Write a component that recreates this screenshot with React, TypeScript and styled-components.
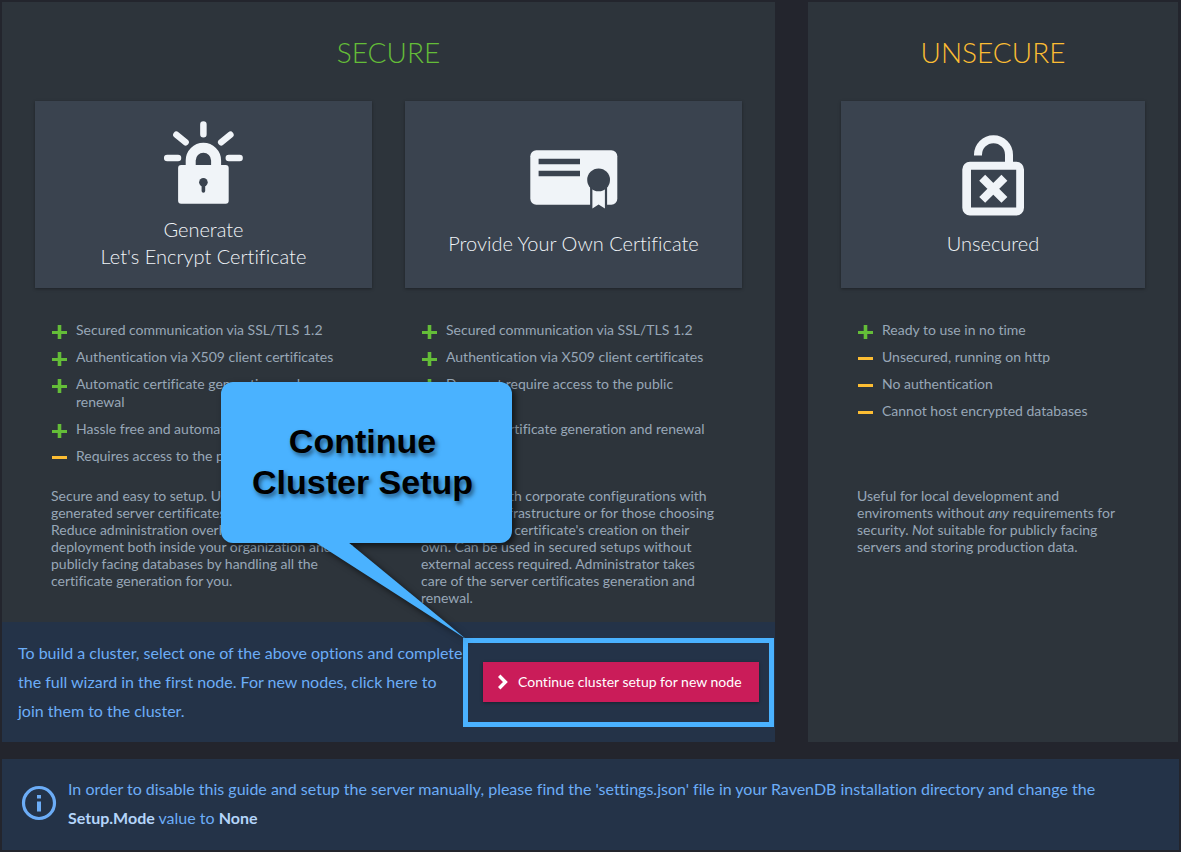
import React from "react";
import styled, { createGlobalStyle } from "styled-components";

const GlobalStyle = createGlobalStyle`
  * { box-sizing: border-box; }
  body {
    margin: 0;
    background: #23252d;
    color: #98a7b7;
    font-family: Lato, "Liberation Sans", sans-serif;
    font-size: 14px;
    line-height: 18px;
    font-variant-ligatures: none;
  }
`;

const Page = styled.main`
  display: flex;
  flex-direction: column;
  gap: 17px;
  padding: 2px 2px 2px 2px;
`;

const Panels = styled.div`
  display: grid;
  grid-template-columns: minmax(0, 773fr) minmax(0, 370fr);
  gap: 33px;
  padding-right: 1px;
`;

const Panel = styled.section`
  display: flex;
  flex-direction: column;
  background: #2d343b;
`;

const PanelTitle = styled.h2<{ $tone: "safe" | "risky" }>`
  margin: 30px 0 29px;
  font-size: 28px;
  font-weight: 300;
  line-height: 40px;
  text-align: center;
  color: ${(p) => (p.$tone === "safe" ? "#64bd38" : "#fcbd33")};
`;

const Options = styled.div`
  display: flex;
  gap: 33px;
  padding: 0 33px;
`;

const Option = styled.article`
  flex: 1 1 0;
  min-width: 0;
`;

const OptionCard = styled.button`
  display: flex;
  flex-direction: column;
  align-items: center;
  justify-content: center;
  gap: 2px;
  width: 100%;
  height: 187px;
  padding: 0 0 1px;
  border: 0;
  background: #3a434f;
  box-shadow: 0 1px 3px rgba(0, 0, 0, 0.35);
  color: #f0f4f8;
  font-family: inherit;
  font-size: 20px;
  font-weight: 300;
  line-height: 27px;
  font-variant-ligatures: none;
  cursor: pointer;
`;

const Details = styled.div`
  padding: 33px 16px 16px;
`;

const Traits = styled.ul`
  display: flex;
  flex-direction: column;
  gap: 9px;
  min-height: 144px;
  margin: 0 0 22px;
  padding: 0 8px 0 1px;
  list-style: none;
`;

const Trait = styled.li`
  display: flex;
  align-items: flex-start;
  gap: 9px;
`;

const TraitIcon = styled.svg`
  flex: none;
  width: 15px;
  height: 18px;
`;

const Description = styled.p`
  margin: 0;
  line-height: 17px;
`;

const ClusterBar = styled.div`
  display: flex;
  align-items: center;
  gap: 16px;
  margin-top: auto;
  padding: 16px 16px 17px;
  background: #243348;
`;

const InfoText = styled.p`
  flex: 1;
  margin: 0;
  color: #6cadf7;
  font-size: 16px;
  line-height: 29px;

  strong { color: #b4d5fa; font-weight: 700; }
`;

const ButtonAnchor = styled.div`
  position: relative;
  flex: none;
`;

const ContinueButton = styled.button`
  display: flex;
  align-items: center;
  gap: 10px;
  width: 276px;
  height: 40px;
  padding: 0 15px;
  border: 0;
  background: #ca1c59;
  box-shadow: 0 1px 3px rgba(0, 0, 0, 0.35);
  color: #fff;
  font-family: inherit;
  font-size: 14px;
  font-variant-ligatures: none;
  white-space: nowrap;
  cursor: pointer;
`;

const Highlight = styled.div`
  position: absolute;
  inset: -24px -15px -25px -20px;
  border: 5px solid #4ab2ff;
  pointer-events: none;
`;

const Callout = styled.div`
  position: absolute;
  right: 247px;
  bottom: 159px;
  display: flex;
  align-items: center;
  justify-content: center;
  width: 291px;
  height: 161px;
  padding-right: 8px;
  border-radius: 12px;
  background: #4ab2ff;
  filter: drop-shadow(3px 3px 3px rgba(0, 0, 0, 0.6));
  color: #000;
  font: bold 34px/41px "Liberation Sans", Arial, sans-serif;
  text-align: center;
  text-shadow: 2px 3px 4px rgba(0, 0, 0, 0.5);
`;

const CalloutTail = styled.svg`
  position: absolute;
  top: 160px;
  left: 94px;
  width: 152px;
  height: 98px;
`;

const Notice = styled.aside`
  display: flex;
  align-items: center;
  gap: 11px;
  padding: 15px 20px 18px 19px;
  background: #243348;
`;

const NoticeIcon = styled.svg`
  flex: none;
  width: 36px;
  height: 36px;
`;

const INK = "#f0f4f8";
const CARD = "#3a434f";

const LetsEncryptIcon = () => (
  <svg width="96" height="96" viewBox="0.6 0 96 96" fill="none" aria-hidden="true">
    <path
      d="M48 6.4V16.3M21 16.8L30.2 24.2M75 16.8L65.8 24.2M11.8 40H22.6M84.2 40H73.4"
      stroke={INK} strokeWidth="6.5" strokeLinecap="round"
    />
    <path d="M35.3 50V42.4a12.7 12.7 0 0 1 25.4 0V50" stroke={INK} strokeWidth="10" />
    <rect x="22.7" y="47" width="50.6" height="38.8" rx="3" fill={INK} />
    <circle cx="48" cy="64.3" r="4.3" fill={CARD} />
    <path d="M48 65V73" stroke={CARD} strokeWidth="3.6" strokeLinecap="round" />
  </svg>
);

const CertificateIcon = () => (
  <svg width="96" height="96" viewBox="0.2 0 96 96" aria-hidden="true">
    <rect x="4.5" y="18.3" width="87" height="54.5" rx="6" fill={INK} />
    <path d="M12.8 26.8H54.2V32.3H12.8zM12.8 38.8H54.2V44.3H12.8zM64.3 48H81.3V73H64.3z" fill={CARD} />
    <path d="M66.6 56H79.1V76.5L72.8 72.6L66.6 76.5z" fill={INK} />
    <circle cx="72.8" cy="47.9" r="11.4" fill={CARD} />
  </svg>
);

const UnsecuredIcon = () => (
  <svg width="96" height="96" viewBox="0 0 96 96" fill="none" aria-hidden="true">
    <path d="M33 23.4V22.7a15.5 15.5 0 0 1 31 0V33" stroke={INK} strokeWidth="8" />
    <path
      fillRule="evenodd"
      d="M25 29.8H71.3a7.7 7.7 0 0 1 7.7 7.7V75.8a7.7 7.7 0 0 1-7.7 7.7H25a7.7 7.7 0 0 1-7.7-7.7V37.5a7.7 7.7 0 0 1 7.7-7.7zM26 37.8V75.5H71.2V37.8z"
      fill={INK}
    />
    <path d="M37.2 45.7L59.4 67.9M59.4 45.7L37.2 67.9" stroke={INK} strokeWidth="8.4" />
  </svg>
);

type TraitItem = { good: boolean; text: string };

const TraitList = ({ items }: { items: TraitItem[] }) => (
  <Traits>
    {items.map((item) => (
      <Trait key={item.text}>
        <TraitIcon viewBox="0 0 15 18" role="img" aria-label={item.good ? "Pro" : "Con"}>
          {item.good ? (
            <path d="M0 10H5.7V4H9.3V10H15V13H9.3V18H5.7V13H0z" fill="#64bd38" />
          ) : (
            <path d="M0 9H15V12H0z" fill="#fcbd33" />
          )}
        </TraitIcon>
        <span>{item.text}</span>
      </Trait>
    ))}
  </Traits>
);

const generateTraits: TraitItem[] = [
  { good: true, text: "Secured communication via SSL/TLS 1.2" },
  { good: true, text: "Authentication via X509 client certificates" },
  { good: true, text: "Automatic certificate generation and renewal" },
  { good: true, text: "Hassle free and automatic setup" },
  { good: false, text: "Requires access to the public Internet" },
];

const provideTraits: TraitItem[] = [
  { good: true, text: "Secured communication via SSL/TLS 1.2" },
  { good: true, text: "Authentication via X509 client certificates" },
  { good: true, text: "Does not require access to the public Internet" },
  { good: false, text: "Manual certificate generation and renewal" },
];

const unsecuredTraits: TraitItem[] = [
  { good: true, text: "Ready to use in no time" },
  { good: false, text: "Unsecured, running on http" },
  { good: false, text: "No authentication" },
  { good: false, text: "Cannot host encrypted databases" },
];

export default function App() {
  return (
    <>
      <GlobalStyle />
      <Page>
        <Panels>
          <Panel>
            <PanelTitle $tone="safe">SECURE</PanelTitle>
            <Options>
              <Option>
                <OptionCard type="button">
                  <LetsEncryptIcon />
                  <span>Generate<br />Let's Encrypt Certificate</span>
                </OptionCard>
                <Details>
                  <TraitList items={generateTraits} />
                  <Description>
                    Secure and easy to setup. Uses automatic<br />
                    generated server certificates for nodes.<br />
                    Reduce administration overhead and ease<br />
                    deployment both inside your organization and for<br />
                    publicly facing databases by handling all the
                    certificate generation for you.
                  </Description>
                </Details>
              </Option>
              <Option>
                <OptionCard type="button">
                  <CertificateIcon />
                  <span>Provide Your Own Certificate</span>
                </OptionCard>
                <Details>
                  <TraitList items={provideTraits} />
                  <Description>
                    Compatible with corporate configurations with<br />
                    existing PKI infrastructure or for those choosing<br />
                    to handle their certificate's creation on their<br />
                    own. Can be used in secured setups without
                    external access required. Administrator takes<br />
                    care of the server certificates generation and<br />
                    renewal.
                  </Description>
                </Details>
              </Option>
            </Options>
            <ClusterBar>
              <InfoText>
                To build a cluster, select one of the above options and complete the full
                wizard in the first node. For new nodes, click here to<br />
                join them to the cluster.
              </InfoText>
              <ButtonAnchor>
                <ContinueButton type="button">
                  <svg width="10" height="16" viewBox="0 0 10 16" fill="none" aria-hidden="true">
                    <path d="M1.2 1.8L7.4 8L1.2 14.2" stroke="#fff" strokeWidth="3.4" />
                  </svg>
                  Continue cluster setup for new node
                </ContinueButton>
                <Highlight />
                <Callout role="note">
                  <CalloutTail viewBox="0 0 152 98" aria-hidden="true">
                    <path d="M0 0H33L151 97z" fill="#4ab2ff" />
                  </CalloutTail>
                  <span>Continue<br />Cluster Setup</span>
                </Callout>
              </ButtonAnchor>
            </ClusterBar>
          </Panel>
          <Panel>
            <PanelTitle $tone="risky">UNSECURE</PanelTitle>
            <Options>
              <Option>
                <OptionCard type="button">
                  <UnsecuredIcon />
                  <span>Unsecured</span>
                </OptionCard>
                <Details>
                  <TraitList items={unsecuredTraits} />
                  <Description>
                    Useful for local development and enviroments without <em>any</em>{" "}
                    requirements for security. <em>Not</em> suitable for publicly facing
                    servers and storing production data.
                  </Description>
                </Details>
              </Option>
            </Options>
          </Panel>
        </Panels>
        <Notice>
          <NoticeIcon viewBox="0 0 36 36" fill="none" aria-hidden="true">
            <circle cx="18" cy="18" r="15.5" stroke="#6cadf7" strokeWidth="3.2" />
            <path d="M16 10H20V13.5H16zM16 16.5H20V26.5H16z" fill="#6cadf7" />
          </NoticeIcon>
          <InfoText>
            In order to disable this guide and setup the server manually, please find the
            'settings.json' file in your RavenDB installation directory and change the{" "}
            <strong>Setup.Mode</strong> value to <strong>None</strong>
          </InfoText>
        </Notice>
      </Page>
    </>
  );
}
